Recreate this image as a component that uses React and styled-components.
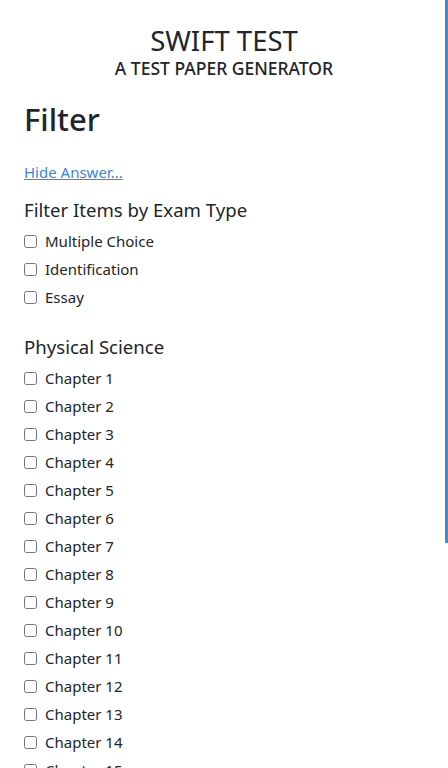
import React from "react";
import styled, { createGlobalStyle } from "styled-components";

const Global = createGlobalStyle`
  html, body { margin: 0; padding: 0; background: #fff; }
  body { font-family: "Noto Sans", "Open Sans", sans-serif; color: #212529; overflow: hidden; }
`;

const Page = styled.div`
  padding: 24px 24px 0 24px;
  height: 768px;
  box-sizing: border-box;
  overflow: hidden;
`;

const Header = styled.header`
  display: flex;
  flex-direction: column;
  align-items: center;
  margin-bottom: 19px;
`;

const Title = styled.div`
  font-size: 27.5px;
  line-height: 34px;
`;

const Subtitle = styled.div`
  font-size: 17.5px;
  line-height: 20px;
  font-weight: 500;
`;

const Heading = styled.h1`
  margin: 0 0 21px 0;
  font-size: 31px;
  line-height: 44px;
  font-weight: 500;
`;

const Link = styled.a`
  display: block;
  font-size: 15px;
  line-height: 20px;
  color: #3d85d8;
  text-decoration: underline;
  margin-bottom: 14px;
`;

const Section = styled.section`
  display: flex;
  flex-direction: column;
  margin-bottom: ${(p) => p.$gap || 0}px;
`;

const SectionTitle = styled.h2`
  margin: 0 0 3px 0;
  font-size: 18.6px;
  line-height: 28px;
  font-weight: 400;
`;

const Row = styled.label`
  display: flex;
  align-items: center;
  height: 28px;
  font-size: 15px;
`;

const Box = styled.input.attrs({ type: "checkbox" })`
  width: 13px;
  height: 13px;
  margin: 0 8px 0 0;
`;

const ScrollThumb = styled.div`
  position: fixed;
  top: 0;
  right: 0;
  width: 3px;
  height: 543px;
  background: #3f8ad2;
  border-radius: 0 0 0 1px;
`;

const types = ["Multiple Choice", "Identification", "Essay"];
const chapters = Array.from({ length: 15 }, (_, i) => `Chapter ${i + 1}`);

export default function App() {
  return (
    <>
      <Global />
      <Page>
        <Header>
          <Title>SWIFT TEST</Title>
          <Subtitle>A TEST PAPER GENERATOR</Subtitle>
        </Header>
        <Heading>Filter</Heading>
        <Link href="#">Hide Answer...</Link>
        <Section $gap={22}>
          <SectionTitle>Filter Items by Exam Type</SectionTitle>
          {types.map((t) => (
            <Row key={t}>
              <Box />
              {t}
            </Row>
          ))}
        </Section>
        <Section>
          <SectionTitle>Physical Science</SectionTitle>
          {chapters.map((c) => (
            <Row key={c}>
              <Box />
              {c}
            </Row>
          ))}
        </Section>
      </Page>
      <ScrollThumb />
    </>
  );
}
